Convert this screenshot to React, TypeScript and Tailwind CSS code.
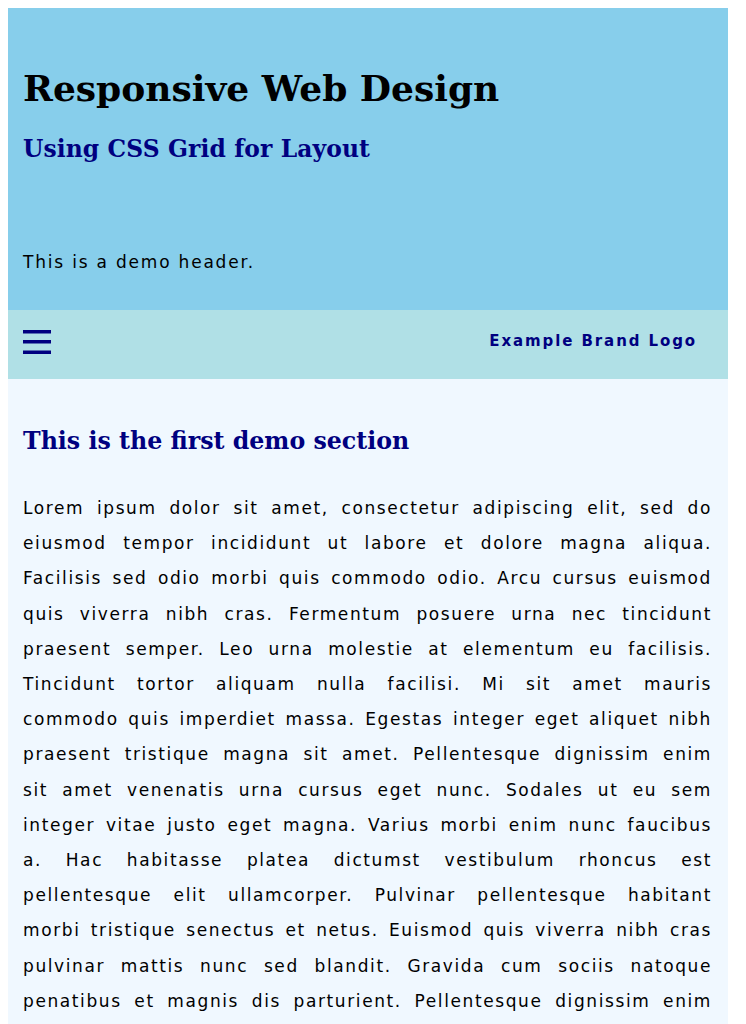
const lines = [
  'Lorem ipsum dolor sit amet, consectetur adipiscing elit, sed do',
  'eiusmod tempor incididunt ut labore et dolore magna aliqua.',
  'Facilisis sed odio morbi quis commodo odio. Arcu cursus euismod',
  'quis viverra nibh cras. Fermentum posuere urna nec tincidunt',
  'praesent semper. Leo urna molestie at elementum eu facilisis.',
  'Tincidunt tortor aliquam nulla facilisi. Mi sit amet mauris',
  'commodo quis imperdiet massa. Egestas integer eget aliquet nibh',
  'praesent tristique magna sit amet. Pellentesque dignissim enim',
  'sit amet venenatis urna cursus eget nunc. Sodales ut eu sem',
  'integer vitae justo eget magna. Varius morbi enim nunc faucibus',
  'a. Hac habitasse platea dictumst vestibulum rhoncus est',
  'pellentesque elit ullamcorper. Pulvinar pellentesque habitant',
  'morbi tristique senectus et netus. Euismod quis viverra nibh cras',
  'pulvinar mattis nunc sed blandit. Gravida cum sociis natoque',
  'penatibus et magnis dis parturient. Pellentesque dignissim enim',
  'sit amet venenatis. Turpis egestas maecenas pharetra convallis',
  'posuere morbi leo urna molestie at elementum eu facilisis sed.',
]

export default function App() {
  return (
    <div className="m-2 w-[720px] font-['DejaVu_Sans',sans-serif] text-black">
      {/* Header */}
      <header className="bg-[#87ceeb] px-[15px] pt-[58px] pb-[36px]">
        <h1 className="font-['DejaVu_Serif',serif] font-bold text-[36px] leading-[44px]">
          Responsive Web Design
        </h1>
        <h2 className="mt-[24px] font-['DejaVu_Serif',serif] font-bold text-[23.4px] leading-[30px] tracking-[0.1px] text-[#000080]">
          Using CSS Grid for Layout
        </h2>
        <p className="mt-[86px] text-[17px] leading-[24px] tracking-[1.8px]">This is a demo header.</p>
      </header>

      {/* Nav */}
      <nav className="bg-[#b0e0e6] h-[69px] pb-[7px] pl-[15px] pr-[31px] flex items-center justify-between">
        <svg width="28" height="25" viewBox="0 0 28 25" className="text-[#000080]">
          <rect x="0" y="1" width="28" height="3.5" fill="currentColor" />
          <rect x="0" y="11" width="28" height="3.5" fill="currentColor" />
          <rect x="0" y="21.5" width="28" height="3.5" fill="currentColor" />
        </svg>
        <span className="font-bold text-[15px] leading-[20px] tracking-[1.9px] text-[#000080]">
          Example Brand Logo
        </span>
      </nav>

      {/* Main */}
      <main className="bg-[#f0f8ff] pl-[15px] pr-[16px] pt-[46px] pb-8">
        <h2 className="font-['DejaVu_Serif',serif] font-bold text-[23.7px] leading-[32px] text-[#000080]">
          This is the first demo section
        </h2>
        <p className="mt-[34px] text-[17px] leading-[35.2px] tracking-[1.6px]">
          {lines.map((l) => (
            <span key={l} className="block text-justify [text-align-last:justify]">
              {l}
            </span>
          ))}
        </p>
      </main>
    </div>
  )
}
